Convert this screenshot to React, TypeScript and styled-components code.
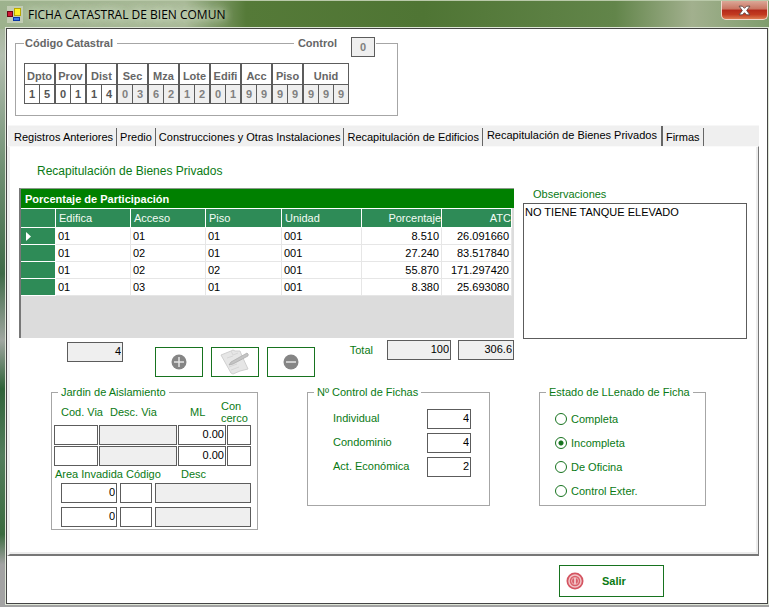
import React from "react";
import styled, { createGlobalStyle, css } from "styled-components";

const GlobalStyle = createGlobalStyle`
  * { box-sizing: border-box; }
  body {
    margin: 0;
    font: 11px/12px "Liberation Sans", Arial, sans-serif;
    color: #000;
  }
  input, button, textarea { font: inherit; color: inherit; margin: 0; border-radius: 0; }
  fieldset { margin: 0; min-width: 0; }
`;

const GREEN = "#0a7a14";

const Window = styled.div`
  display: flex;
  flex-direction: column;
  min-height: 100vh;
  padding: 0 1px 3px 6px;
  border-top: 1px solid #b9c9a9;
  background:
    linear-gradient(90deg, #9db28d 0, #a9ba98 24%, #557a38 32%, #4f7534 55%, #62854a 80%, #a2b08e 90%, #7f9d6d 100%) top / 100% 28px no-repeat,
    linear-gradient(180deg, #9cae8c 0, #b4bfb0 9%, #6f8f72 28%, #3f6a47 45%, #a0a7a0 56%, #2f6338 64%, #537d5c 75%, #3b6b3f 88%, #a3a3a3 93%) #999;
`;

const TitleBar = styled.header`
  display: flex;
  align-items: center;
  height: 27px;
  flex: none;
`;

const Title = styled.h1`
  margin: 0 auto 0 4px;
  font: 12px/16px "Open Sans", "Noto Sans", sans-serif;
  text-shadow: 0 0 8px #dfe9d5, 0 0 8px #dfe9d5;
`;

const CloseButton = styled.button`
  display: grid;
  place-items: center;
  align-self: flex-start;
  width: 47px;
  height: 19px;
  padding: 0;
  border: 1px solid #f0d6cc;
  border-top: 0;
  border-radius: 0 0 5px 5px;
  background: linear-gradient(#dba796 0, #c97461 45%, #b3291a 50%, #c23a20 75%, #dc7a50 100%);
`;

const Client = styled.main`
  display: flex;
  flex-direction: column;
  flex: 1;
  border: 1px solid #444;
  box-shadow: 0 0 0 1px #dfe6d8;
  background: #fff;
`;

const Group = styled.fieldset`
  padding: 0;
  border: 1px solid #a6a6a6;
  color: ${GREEN};
`;

const GroupBody = styled.div<{ $pad: string }>`
  padding: ${(p) => p.$pad};
`;

const Legend = styled.legend`
  margin-left: 6px;
  padding: 0 3px;
  line-height: 12px;
  white-space: nowrap;
`;

const CodeGroup = styled(Group)`
  max-width: 383px;
  margin: 8px 0 9px 8px;
  color: #666;
  font-weight: bold;
`;

const CodeLegend = styled.legend`
  display: flex;
  gap: 4px;
  width: calc(100% - 29px);
  height: 13px;
  margin-left: 8px;
  padding: 0 1px;
`;

const LegendLine = styled.span`
  flex: 1;
  height: 1px;
  margin-top: 6px;
  background: #a6a6a6;
`;

const CodeFields = styled.div`
  display: flex;
`;

const CodePart = styled.div`
  border: 1px solid #5c5c5c;
  text-align: center;
`;

const CodeName = styled.div`
  height: 21px;
  line-height: 24px;
  border-bottom: 1px solid #5c5c5c;
`;

const Digits = styled.div`
  display: flex;
`;

const Digit = styled.input<{ $shaded: boolean }>`
  width: 15px;
  height: 18px;
  padding: 0;
  border: 0;
  text-align: center;
  color: ${(p) => (p.$shaded ? "#808080" : "#555")};
  background: ${(p) => (p.$shaded ? "#efefef" : "#fff")};
  & + & { border-left: 1px solid #5c5c5c; }
  &:first-child { width: 14px; }
`;

const ControlInput = styled.input`
  width: 24px;
  height: 20px;
  margin-left: 10px;
  padding: 0;
  border: 1px solid #5c5c5c;
  background: #efefef;
  color: #808080;
  text-align: center;
`;

const TabStrip = styled.div`
  display: flex;
  align-items: flex-end;
  height: 21px;
  margin: 0 8px 0 1px;
  padding-left: 3px;
  background: #efefef;
  border-top: 1px solid #f7f7f7;
`;

const Tab = styled.button<{ $active?: boolean }>`
  height: ${(p) => (p.$active ? "20px" : "18px")};
  padding: ${(p) => (p.$active ? "0 4px 3px" : "0 3px")};
  border: 0;
  border-right: ${(p) => (p.$active ? "2px" : "1px")} solid #666;
  background: #f0f0f0;
  white-space: nowrap;
`;

const Panel = styled.section`
  margin: 0 8px 0 0;
  padding: 0 11px 24px 9px;
  border: solid;
  border-width: 1px 1px 2px 3px;
  border-color: #fafafa #777 #777 #f0f0f0;
  box-shadow: inset -2px -2px 0 #ececec;
`;

const PanelTitle = styled.h2`
  margin: 0;
  padding: 17px 0 10px 18px;
  font: 12px/14px "Liberation Sans", Arial, sans-serif;
  color: ${GREEN};
`;

const Columns = styled.div`
  display: grid;
  grid-template-columns: 495fr 224fr;
  gap: 9px;
`;

const GridBox = styled.div`
  height: 150px;
  border-left: 2px solid #777;
  border-top: 1px solid #8a9a8a;
  background: #dcdcdc;
`;

const Table = styled.table`
  width: 100%;
  table-layout: fixed;
  border-collapse: separate;
  border-spacing: 0;
`;

const Col = styled.col<{ $width?: number }>`
  width: ${(p) => (p.$width ? `${p.$width}px` : "auto")};
`;

const Caption = styled.caption`
  height: 19px;
  padding-left: 4px;
  background: #008000;
  color: #fff;
  font-weight: bold;
  line-height: 20px;
  text-align: left;
`;

const cell = css<{ $right?: boolean }>`
  padding: 0 2px;
  text-align: ${(p) => (p.$right ? "right" : "left")};
  white-space: nowrap;
  overflow: hidden;
`;

const Th = styled.th<{ $right?: boolean }>`
  ${cell}
  height: 20px;
  padding: 0 ${(p) => (p.$right ? "0" : "3px")};
  border: 1px solid #fff;
  border-width: 1px 1px 1px 0;
  background: #2e8b57;
  color: #f4fbf6;
  font-weight: normal;
`;

const Td = styled.td<{ $right?: boolean }>`
  ${cell}
  height: 17px;
  border: solid #e6e6e6;
  border-width: 0 1px 1px 0;
  background: #fff;
`;

const RowHead = styled.th`
  height: 17px;
  padding: 0 0 0 5px;
  border: solid #fff;
  border-width: 0 1px 1px 0;
  background: #2e8b57;
  text-align: left;
  line-height: 0;
`;

const Notes = styled.label`
  display: flex;
  flex-direction: column;
  color: ${GREEN};
  span { padding-left: 10px; line-height: 13px; }
`;

const NotesArea = styled.textarea`
  height: 136px;
  margin-top: 2px;
  padding: 2px 1px;
  border: 1px solid #5c5c5c;
  background: #fff;
  color: #000;
  resize: none;
`;

const Field = styled.input<{ $shaded?: boolean }>`
  width: 100%;
  min-width: 0;
  height: 20px;
  padding: 0 1px 2px;
  border: 1px solid #5c5c5c;
  background: ${(p) => (p.$shaded ? "#efefef" : "#fff")};
  color: #000;
  text-align: right;
`;

const Summary = styled.div`
  display: flex;
  align-items: flex-start;
  padding: 2px 0 0;
  color: ${GREEN};
`;

const CountBox = styled.div`
  width: 56px;
  margin: 2px 32px 0 48px;
`;

const Actions = styled.div`
  display: flex;
  gap: 8px;
  padding-top: 7px;
  margin-right: auto;
`;

const ActionButton = styled.button`
  display: grid;
  place-items: center;
  width: 48px;
  height: 30px;
  padding: 0;
  border: 1px solid #17731f;
  background: #fff;
`;

const Totals = styled.label`
  display: grid;
  grid-template-columns: auto 64px 56px;
  column-gap: 7px;
  line-height: 20px;
  span { padding-right: 7px; }
`;

const Groups = styled.div`
  display: grid;
  grid-template-columns: 207fr 183fr 167fr;
  column-gap: 49px;
  align-items: start;
  padding: 9px 41px 0 32px;
`;

const GardenRow = styled.div<{ $cols: string; $gap: number; $left: number; $top: number }>`
  display: grid;
  grid-template-columns: ${(p) => p.$cols};
  column-gap: ${(p) => p.$gap}px;
  align-items: center;
  padding: ${(p) => p.$top}px 0 0 ${(p) => p.$left}px;
  white-space: nowrap;
`;

const CountRow = styled.label`
  display: flex;
  justify-content: space-between;
  height: 24px;
  line-height: 18px;
  ${Field} { width: 44px; }
`;

const RadioRow = styled.label`
  display: flex;
  align-items: center;
  gap: 4px;
  height: 24px;
`;

const Radio = styled.input`
  appearance: none;
  width: 12px;
  height: 12px;
  margin: 0;
  border: 1px solid #17731f;
  border-radius: 50%;
  &:checked { background: radial-gradient(circle, #17731f 2px, #fff 3px); }
`;

const Footer = styled.footer`
  display: flex;
  justify-content: flex-end;
  padding: 9px 103px 5px 0;
`;

const ExitButton = styled.button`
  display: flex;
  align-items: center;
  gap: 18px;
  width: 105px;
  height: 32px;
  padding: 0 6px;
  border: 1px solid #17731f;
  background: #fff;
  color: ${GREEN};
  font-weight: bold;
`;

const AppIcon = () => (
  <svg width="18" height="18" viewBox="0 0 18 18" aria-hidden="true">
    <rect x="1" y="0" width="16" height="17" fill="#d8dccb" opacity=".6" />
    <rect x="1.500" y="5.500" width="5" height="5" fill="#d01832" stroke="#6c0718" />
    <rect x="8.500" y="2.500" width="6" height="7" fill="#fff125" stroke="#b8a800" />
    <rect x="7.500" y="11.500" width="6" height="3" fill="#3b7be8" stroke="#0c37a4" />
  </svg>
);

const CloseIcon = () => (
  <svg width="13" height="11" viewBox="0 0 12 10" aria-hidden="true">
    <path d="M1 1h3l2 2 2-2h3L8 5l3 4H8L6 7 4 9H1l3-4z" fill="#fff" stroke="#59433f" strokeWidth=".8" />
  </svg>
);

const RoundIcon = ({ plus }: { plus?: boolean }) => (
  <svg width="16" height="16" viewBox="0 0 16 16" aria-hidden="true">
    <circle cx="8" cy="8" r="7.500" fill="#858585" />
    <path d={plus ? "M3 8h10M8 3v10" : "M3 8h10"} stroke="#e4e4e4" strokeWidth="1.500" />
  </svg>
);

const EditIcon = () => (
  <svg width="30" height="26" viewBox="0 0 30 26" aria-hidden="true">
    <path d="M1 6 11 2l2-1 2 1 5 0 2 5 6 13-8 2-7 3-2-1z" fill="#e6e6e6" stroke="#d0d0d0" />
    <path d="m11 2 2 4 5-2M7 9l6-2M9 18l8-3M11 21l8-3" fill="none" stroke="#d6d6d6" />
    <path d="M27 4 11 13l-2 3 4-1L28 7q1-2-1-3z" fill="#c4c4c4" stroke="#a8a8a8" strokeWidth=".7" />
  </svg>
);

const PowerIcon = () => (
  <svg width="18" height="18" viewBox="0 0 18 18" aria-hidden="true">
    <circle cx="9" cy="9" r="8.500" fill="#d45461" />
    <circle cx="9" cy="9" r="6" fill="#d9606a" stroke="#f2c5c8" strokeWidth="1.500" />
    <circle cx="9" cy="9" r="3.500" fill="none" stroke="#eeb0b5" />
    <path d="M9 6v6" stroke="#fff" strokeWidth="1.200" />
  </svg>
);

const codes = [
  ["Dpto", "15"], ["Prov", "01"], ["Dist", "14"], ["Sec", "03"], ["Mza", "62"],
  ["Lote", "12"], ["Edifi", "01"], ["Acc", "99"], ["Piso", "99"], ["Unid", "999"],
];

const tabs = [
  "Registros Anteriores", "Predio", "Construcciones y Otras Instalaciones",
  "Recapitulación de Edificios", "Recapitulación de Bienes Privados", "Firmas",
];

const columns = ["Edifica", "Acceso", "Piso", "Unidad", "Porcentaje", "ATC"];

const rows = [
  ["01", "01", "01", "001", "8.510", "26.091660"],
  ["01", "02", "01", "001", "27.240", "83.517840"],
  ["01", "02", "02", "001", "55.870", "171.297420"],
  ["01", "03", "01", "001", "8.380", "25.693080"],
];

const viaCols = "44fr 78fr 48fr 24fr";
const areaCols = "56fr 32fr 96fr";

export default function App() {
  return (
    <>
      <GlobalStyle />
      <Window>
        <TitleBar>
          <AppIcon />
          <Title>FICHA CATASTRAL DE BIEN COMUN</Title>
          <CloseButton aria-label="Cerrar"><CloseIcon /></CloseButton>
        </TitleBar>
        <Client>
          <CodeGroup>
            <CodeLegend>
              <span>Código Catastral</span>
              <LegendLine />
              <label htmlFor="control">Control</label>
              <ControlInput id="control" defaultValue="0" readOnly />
            </CodeLegend>
            <GroupBody $pad="13px 8px 11px">
              <CodeFields>
                {codes.map(([name, value], i) => (
                  <CodePart key={name}>
                    <CodeName>{name}</CodeName>
                    <Digits>
                      {value.split("").map((d, j) => (
                        <Digit key={j} $shaded={i > 2} aria-label={`${name} ${j + 1}`} defaultValue={d} maxLength={1} />
                      ))}
                    </Digits>
                  </CodePart>
                ))}
              </CodeFields>
            </GroupBody>
          </CodeGroup>

          <TabStrip role="tablist">
            {tabs.map((name, i) => (
              <Tab key={name} role="tab" aria-selected={i === 4} $active={i === 4}>{name}</Tab>
            ))}
          </TabStrip>

          <Panel>
            <PanelTitle>Recapitulación de Bienes Privados</PanelTitle>
            <Columns>
              <div>
                <GridBox>
                  <Table>
                    <Caption>Porcentaje de Participación</Caption>
                    <colgroup>
                      {[35, 75, 75, 76, 80, 80].map((w, i) => <Col key={i} $width={w} />)}
                      <Col />
                      <Col $width={2} />
                    </colgroup>
                    <thead>
                      <tr>
                        <Th aria-label="Fila" />
                        {columns.map((c, i) => <Th key={c} $right={i > 3} scope="col">{c}</Th>)}
                      </tr>
                    </thead>
                    <tbody>
                      {rows.map((r, i) => (
                        <tr key={i}>
                          <RowHead scope="row" aria-label={`Fila ${i + 1}`}>
                            {i === 0 && <svg width="5" height="9"><path d="M0 0 5 4.500 0 9z" fill="#fff" /></svg>}
                          </RowHead>
                          {r.map((v, j) => <Td key={j} $right={j > 3}>{v}</Td>)}
                        </tr>
                      ))}
                    </tbody>
                  </Table>
                </GridBox>
                <Summary>
                  <CountBox><Field $shaded aria-label="Cantidad" defaultValue="4" readOnly /></CountBox>
                  <Actions>
                    <ActionButton aria-label="Agregar"><RoundIcon plus /></ActionButton>
                    <ActionButton aria-label="Editar"><EditIcon /></ActionButton>
                    <ActionButton aria-label="Quitar"><RoundIcon /></ActionButton>
                  </Actions>
                  <Totals>
                    <span>Total</span>
                    <Field $shaded defaultValue="100" readOnly />
                    <Field $shaded aria-label="Total ATC" defaultValue="306.6" readOnly />
                  </Totals>
                </Summary>
              </div>
              <Notes>
                <span>Observaciones</span>
                <NotesArea defaultValue="NO TIENE TANQUE ELEVADO" />
              </Notes>
            </Columns>

            <Groups>
              <Group>
                <Legend>Jardin de Aislamiento</Legend>
                <GroupBody $pad="2px 6px 2px 2px">
                  <GardenRow $cols="49fr 80fr 31fr 30fr" $gap={0} $left={7} $top={0}>
                    <span>Cod. Via</span><span>Desc. Via</span><span>ML</span><span>Con<br />cerco</span>
                  </GardenRow>
                  {[0, 1].map((i) => (
                    <GardenRow key={i} $cols={viaCols} $gap={1} $left={0} $top={1}>
                      <Field aria-label="Cod. Via" />
                      <Field $shaded aria-label="Desc. Via" readOnly />
                      <Field aria-label="ML" defaultValue="0.00" />
                      <Field aria-label="Con cerco" />
                    </GardenRow>
                  ))}
                  <GardenRow $cols="71fr 55fr 70fr" $gap={0} $left={1} $top={2}>
                    <span>Area Invadida</span><span>Código</span><span>Desc</span>
                  </GardenRow>
                  {[0, 1].map((i) => (
                    <GardenRow key={i} $cols={areaCols} $gap={3} $left={7} $top={i ? 4 : 3}>
                      <Field aria-label="Area Invadida" defaultValue="0" />
                      <Field aria-label="Código" />
                      <Field $shaded aria-label="Desc" readOnly />
                    </GardenRow>
                  ))}
                </GroupBody>
              </Group>

              <Group>
                <Legend>Nº Control de Fichas</Legend>
                <GroupBody $pad="11px 18px 24px 25px">
                  <CountRow>Individual<Field defaultValue="4" /></CountRow>
                  <CountRow>Condominio<Field defaultValue="4" /></CountRow>
                  <CountRow>Act. Económica<Field defaultValue="2" /></CountRow>
                </GroupBody>
              </Group>

              <Group>
                <Legend>Estado de LLenado de Ficha</Legend>
                <GroupBody $pad="9px 10px 2px 15px">
                  {["Completa", "Incompleta", "De Oficina", "Control Exter."].map((name, i) => (
                    <RadioRow key={name}>
                      <Radio type="radio" name="estado" defaultChecked={i === 1} />
                      {name}
                    </RadioRow>
                  ))}
                </GroupBody>
              </Group>
            </Groups>
          </Panel>

          <Footer>
            <ExitButton><PowerIcon />Salir</ExitButton>
          </Footer>
        </Client>
      </Window>
    </>
  );
}
